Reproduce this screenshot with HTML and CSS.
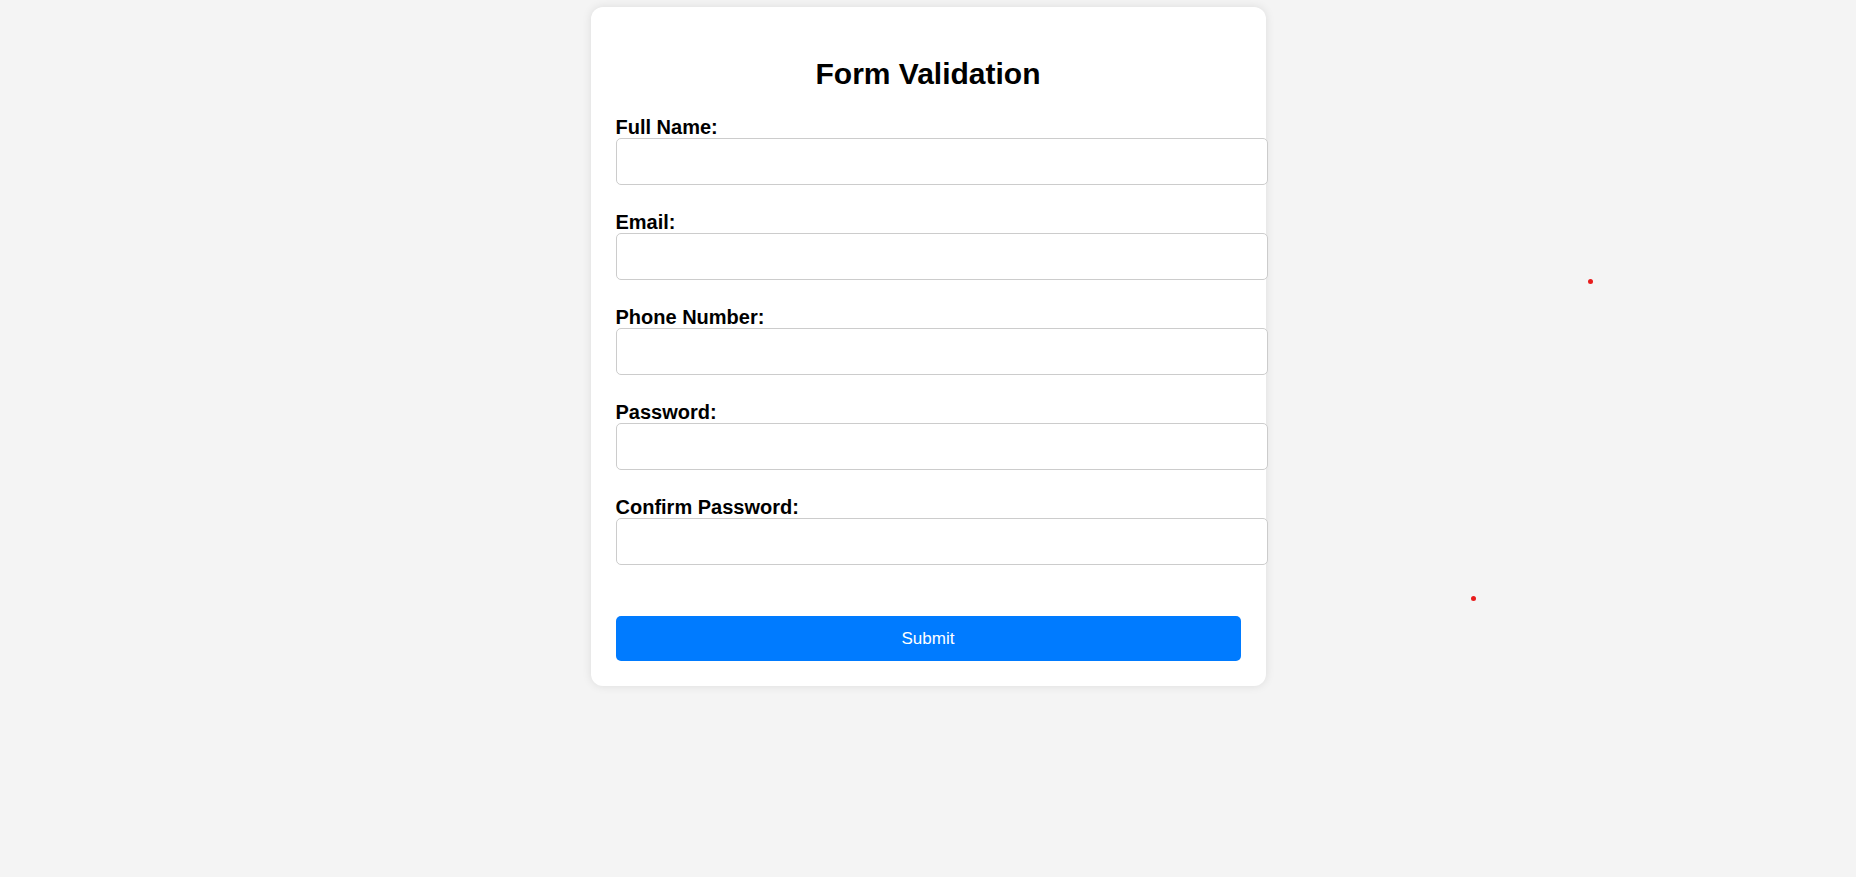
FILE: index.html
```html
<!DOCTYPE html>
<html lang="en">
<head>
<meta charset="UTF-8">
<title>Form Validation</title>
<link rel="stylesheet" href="styles.css">
</head>
<body>
  <div class="page">
    <form class="card">
      <h2 class="title">Form Validation</h2>
      <div class="field">
        <label class="label" for="name">Full Name:</label>
        <input class="input" id="name" type="text">
      </div>
      <div class="field">
        <label class="label" for="email">Email:</label>
        <input class="input" id="email" type="text">
      </div>
      <div class="field">
        <label class="label" for="phone">Phone Number:</label>
        <input class="input" id="phone" type="text">
      </div>
      <div class="field">
        <label class="label" for="pw">Password:</label>
        <input class="input" id="pw" type="password">
      </div>
      <div class="field">
        <label class="label" for="pw2">Confirm Password:</label>
        <input class="input" id="pw2" type="password">
      </div>
      <button class="submit" type="button">Submit</button>
    </form>
  </div>
  <span class="dot dot-a"></span>
  <span class="dot dot-b"></span>
</body>
</html>
```
FILE: styles.css
```css
html, body {
  margin: 0;
  padding: 0;
}
body {
  background: #f4f4f4;
  font-family: "Liberation Sans", Arial, sans-serif;
  color: #000;
  min-height: 877px;
  position: relative;
}
.page {
  display: flex;
  justify-content: center;
  padding-top: 7px;
}
.card {
  width: 675px;
  box-sizing: border-box;
  padding: 25px;
  background: #fff;
  border-radius: 12px;
  box-shadow: 0 0 10px rgba(0, 0, 0, 0.1);
  display: flex;
  flex-direction: column;
}
.title {
  margin: 25px 0 25px;
  font-size: 30px;
  font-weight: bold;
  text-align: center;
  line-height: 34px;
}
.field {
  display: flex;
  flex-direction: column;
  align-items: flex-start;
  margin-bottom: 26px;
}
.label {
  font-size: 20px;
  font-weight: bold;
  line-height: 22px;
}
.input {
  box-sizing: content-box;
  width: 100%;
  height: 21px;
  padding: 12px 13px 12px 12px;
  margin: 0;
  border: 1px solid #ccc;
  border-radius: 5px;
  font-size: 16px;
  font-family: "Liberation Sans", Arial, sans-serif;
  background: #fff;
  outline: none;
}
.submit {
  margin-top: 25px;
  height: 45px;
  width: 100%;
  border: none;
  border-radius: 5px;
  background: #007bff;
  color: #fff;
  font-size: 17px;
  font-family: "Liberation Sans", Arial, sans-serif;
  cursor: pointer;
}
.dot {
  position: absolute;
  width: 5px;
  height: 5px;
  border-radius: 50%;
  background: #e81c1c;
}
.dot-a {
  left: 1588px;
  top: 279px;
}
.dot-b {
  left: 1471px;
  top: 596px;
}
```
